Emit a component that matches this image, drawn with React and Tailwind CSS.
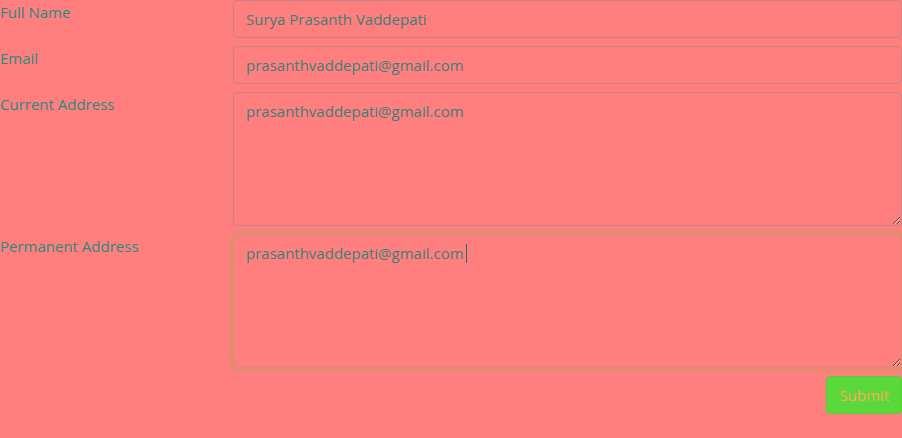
import React from 'react';

const font = { fontFamily: '"Open Sans", "Noto Sans", sans-serif' };

const Field = ({ label, children }) => (
  <div className="grid grid-cols-[233px_1fr] mb-2">
    <label className="text-[15px] leading-6 text-[#2b8a7f]">{label}</label>
    {children}
  </div>
);

const inputCls =
  'w-full h-[38px] px-3 py-1.5 text-[15px] leading-6 text-[#3d7f78] bg-transparent border border-[#c48585] rounded outline-none';

const areaCls =
  'w-full h-[134px] px-3 py-1.5 text-[15px] leading-6 text-[#3d7f78] bg-transparent border rounded outline-none block';

export default function App() {
  return (
    <div className="min-h-screen w-[902px] h-[438px] bg-[#ff7f7f] overflow-hidden" style={font}>
      <form>
        <Field label="Full Name">
          <input className={inputCls} defaultValue="Surya Prasanth Vaddepati" />
        </Field>
        <Field label="Email">
          <input className={inputCls} defaultValue="prasanthvaddepati@gmail.com" />
        </Field>
        <Field label="Current Address">
          <textarea className={`${areaCls} border-[#c48585]`} defaultValue="prasanthvaddepati@gmail.com" />
        </Field>
        <Field label="Permanent Address">
          <div className="relative">
            <textarea
              className={`${areaCls} border-[#cf9466] shadow-[0_0_0_3px_rgba(205,150,100,0.55)]`}
              defaultValue="prasanthvaddepati@gmail.com"
            />
            {/* caret */}
            <span className="absolute left-[233px] top-[10px] w-px h-[19px] bg-[#1f6f66]" />
          </div>
        </Field>
        <div className="flex justify-end">
          <button
            type="button"
            className="h-[38px] px-3 text-[15px] leading-6 text-[#f5a95a] bg-[#5cd93a] border border-[#55d038] rounded"
          >
            Submit
          </button>
        </div>
      </form>
    </div>
  );
}
